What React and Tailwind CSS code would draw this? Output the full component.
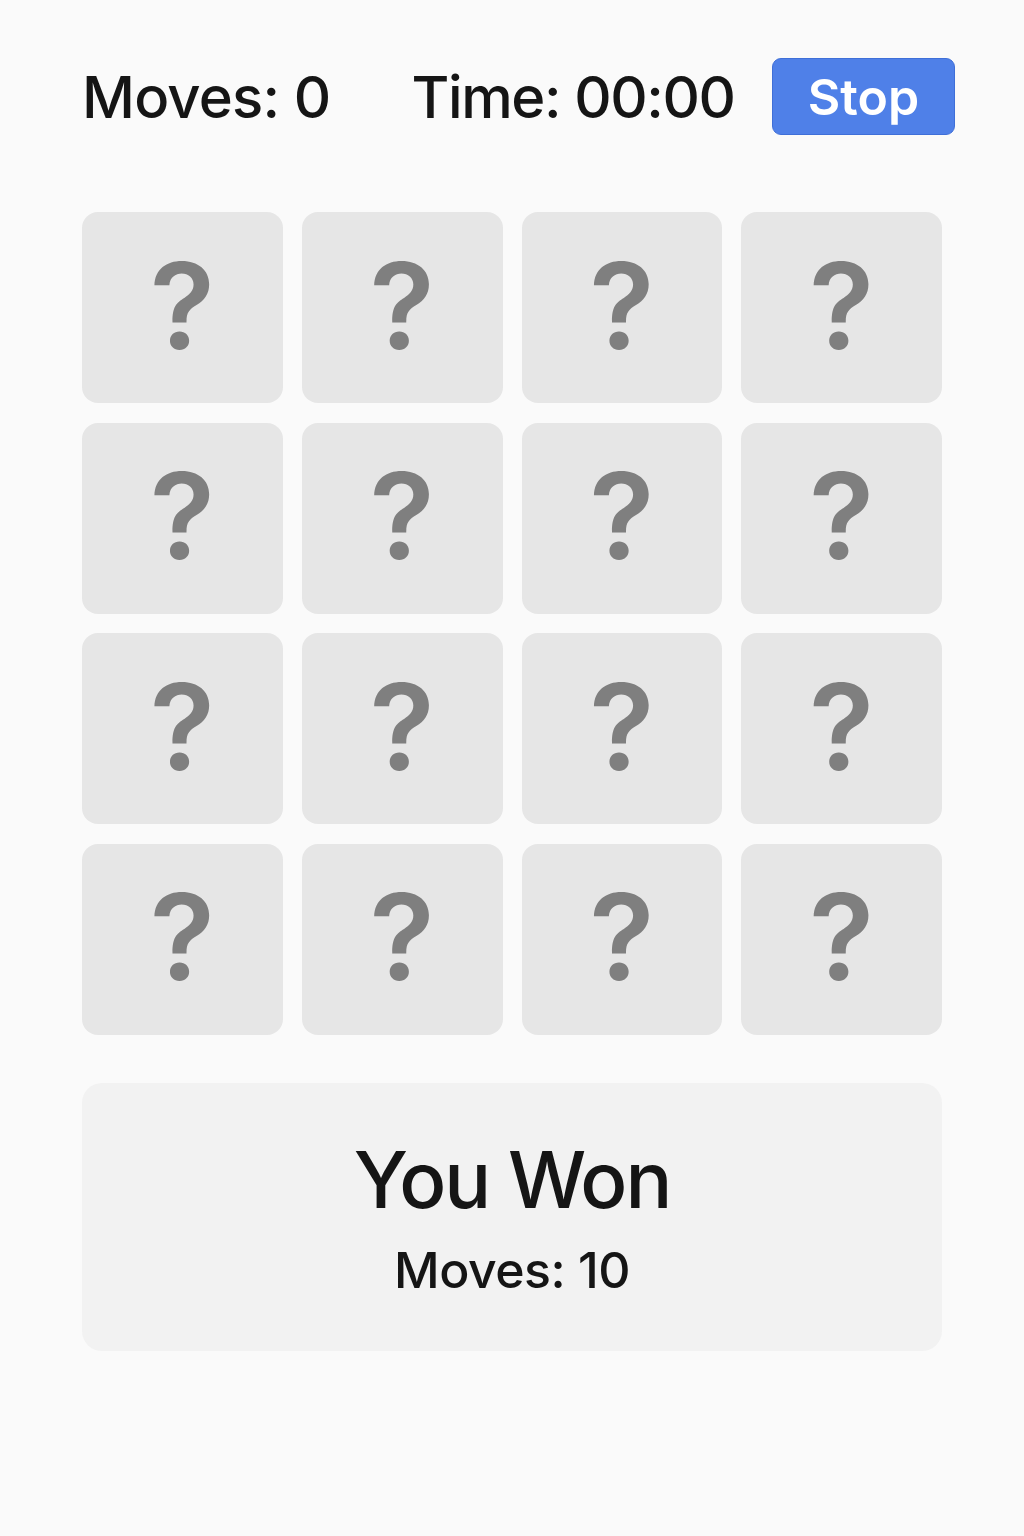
const cards = Array.from({ length: 16 }, (_, i) => i);

export default function App() {
  return (
    <div
      className="min-h-[1536px] w-[1024px] bg-[#fafafa] text-[#151515]"
      style={{ fontFamily: 'Inter, "Noto Sans", sans-serif' }}
    >
      <div className="flex items-center pl-[82px] pt-[58px] h-[135px]">
        <div className="text-[58px] font-medium tracking-[-0.8px] leading-none">Moves: 0</div>
        <div className="ml-[81px] text-[58px] font-medium tracking-[-1.4px] leading-none">Time: 00:00</div>
        <button className="ml-auto mr-[69px] w-[183px] h-[77px] rounded-[9px] bg-[#4f80e8] border border-[#3f6fd8] text-white text-[50px] font-semibold leading-none">
          Stop
        </button>
      </div>

      <div className="grid grid-cols-4 gap-x-[19px] gap-y-[19.5px] px-[82px] mt-[77px]">
        {cards.map((i) => (
          <div
            key={i}
            className="h-[191px] rounded-[16px] bg-[#e6e6e6] flex items-center justify-center"
          >
            <span className="text-[120px] font-semibold text-[#7f7f7f] leading-none mt-[-4px]">?</span>
          </div>
        ))}
      </div>

      <div className="mx-[82px] mt-[48px] h-[268px] rounded-[20px] bg-[#f2f2f2] flex flex-col items-center justify-center">
        <div className="text-[78px] font-medium tracking-[-2px] leading-none mt-[2px]">You Won</div>
        <div className="text-[50px] font-medium tracking-[-0.5px] leading-none mt-[26px]">Moves: 10</div>
      </div>
    </div>
  );
}
